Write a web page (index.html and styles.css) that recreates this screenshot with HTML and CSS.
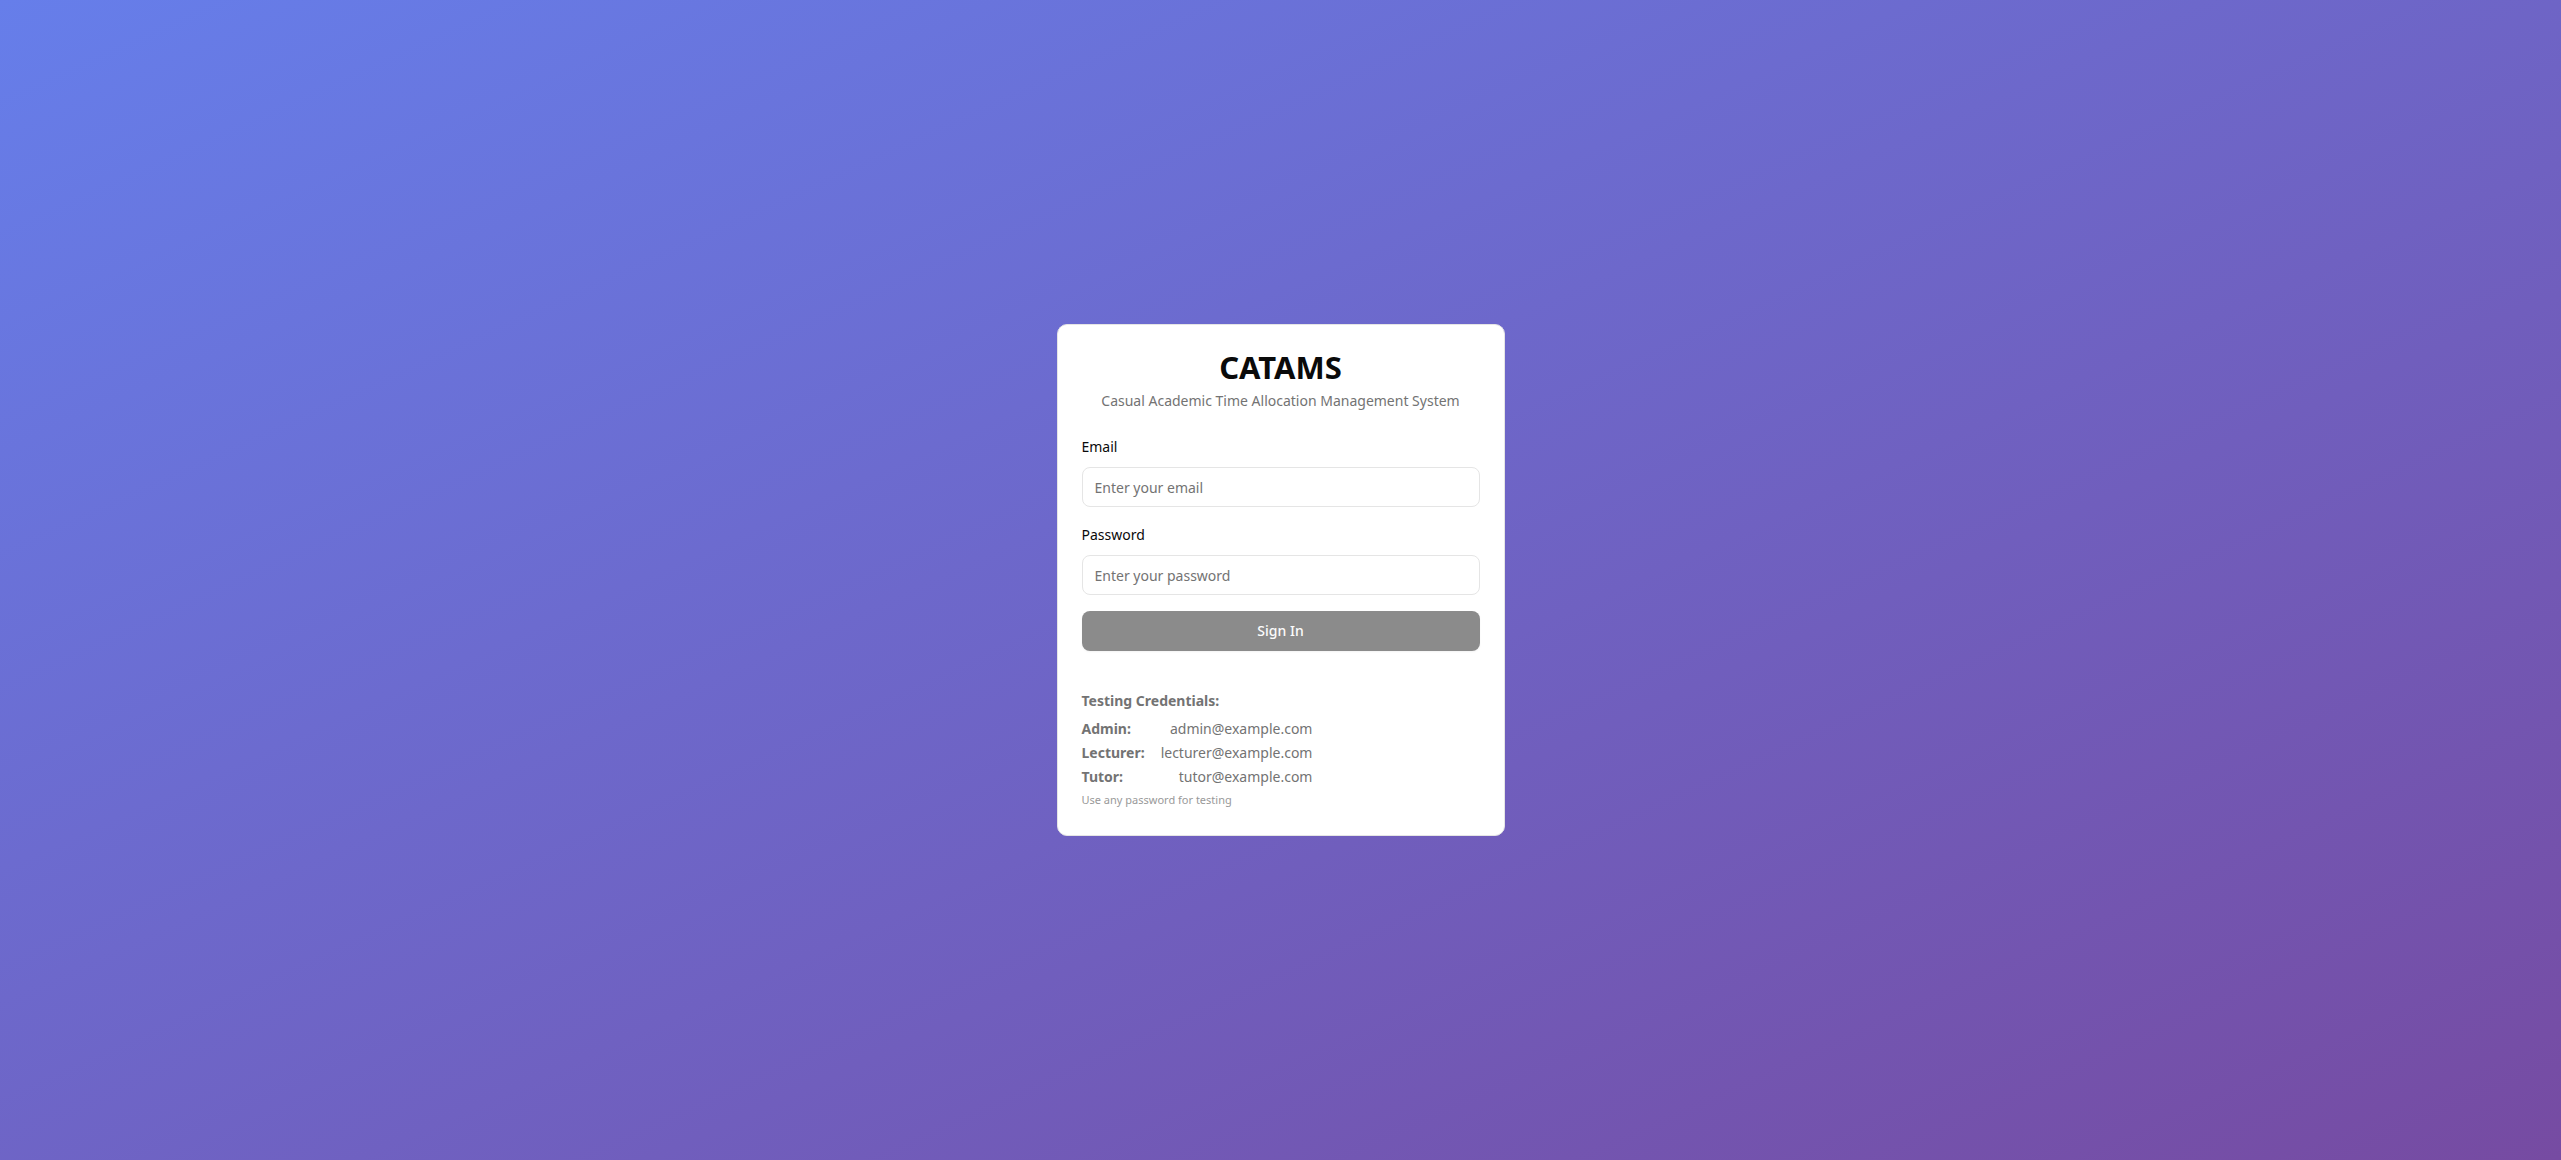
FILE: index.html
```html
<!DOCTYPE html>
<html lang="en">
<head>
<meta charset="utf-8">
<title>CATAMS</title>
<link rel="stylesheet" href="styles.css">
</head>
<body>
<main class="card">
  <header class="header">
    <h1 class="title">CATAMS</h1>
    <p class="subtitle">Casual Academic Time Allocation Management System</p>
  </header>
  <form class="form">
    <div class="field">
      <label class="label" for="email">Email</label>
      <input class="input" id="email" type="email" placeholder="Enter your email">
    </div>
    <div class="field">
      <label class="label" for="password">Password</label>
      <input class="input" id="password" type="password" placeholder="Enter your password">
    </div>
    <button class="button" type="submit" disabled>Sign In</button>
  </form>
  <section class="help">
    <p class="help-title">Testing Credentials:</p>
    <table class="credentials">
      <tr><th scope="row">Admin:</th><td>admin@example.com</td></tr>
      <tr><th scope="row">Lecturer:</th><td>lecturer@example.com</td></tr>
      <tr><th scope="row">Tutor:</th><td>tutor@example.com</td></tr>
    </table>
    <p class="note">Use any password for testing</p>
  </section>
</main>
</body>
</html>
```
FILE: styles.css
```css
* {
  box-sizing: border-box;
  margin: 0;
}

body {
  min-height: 100vh;
  display: flex;
  align-items: center;
  justify-content: center;
  padding: 16px;
  background: linear-gradient(to bottom right, #667eea 0%, #764ba2 100%);
  font: 14px/20px "Noto Sans", "Open Sans", sans-serif;
  color: #0a0a0a;
}

.card {
  width: 100%;
  max-width: 448px;
  padding: 24px;
  border: 1px solid #e5e5e5;
  border-radius: 10px;
  background: #fff;
}

.header {
  text-align: center;
}

.title {
  font-size: 31px;
  line-height: 36px;
  font-weight: 700;
}

.subtitle {
  margin-top: 6px;
  color: #737373;
}

.form {
  display: grid;
  gap: 16px;
  margin-top: 24px;
}

.field {
  display: grid;
  gap: 8px;
}

.label {
  line-height: 24px;
}

.input,
.button {
  width: 100%;
  height: 40px;
  border-radius: 8px;
  font: inherit;
}

.input {
  padding: 0 12px;
  border: 1px solid #e5e5e5;
  background: #fff;
  color: #0a0a0a;
}

.input::placeholder {
  color: #737373;
}

.button {
  border: 0;
  background: #8b8b8b;
  box-shadow: 0 1px 2px rgba(0, 0, 0, 0.05);
  color: #fcfcfc;
  font-weight: 500;
}

.help {
  margin-top: 40px;
  color: #737373;
}

.help-title {
  margin-bottom: 6px;
  font-weight: 700;
}

.credentials {
  border-collapse: collapse;
  line-height: 24px;
}

.credentials th {
  padding: 0 16px 0 0;
  text-align: left;
  font-weight: 700;
}

.credentials td {
  padding: 0;
  text-align: right;
}

.note {
  font-size: 11px;
  line-height: 22px;
  color: #999;
}
```
